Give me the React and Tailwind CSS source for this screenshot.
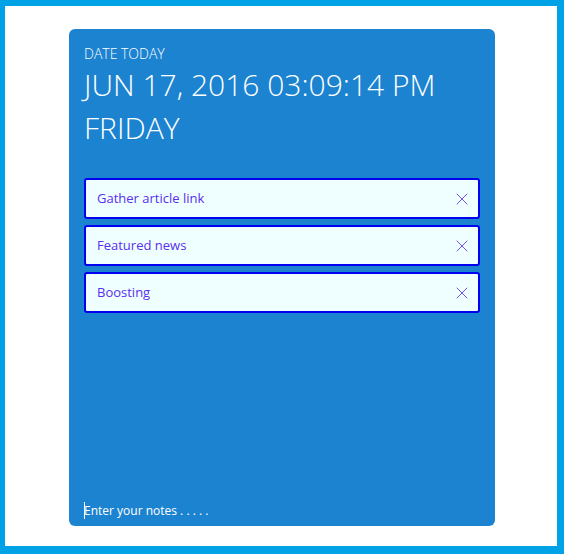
import React from "react";
import { X } from "lucide-react";

const todos = ["Gather article link", "Featured news", "Boosting"];

export default function App() {
    return (
        <div className="w-[564px] h-[554px] bg-white border-[#00a2e6] border-t-[6px] border-l-[5px] border-r-[7px] border-b-[8px] font-['Open_Sans',sans-serif]">
            <div className="ml-[64px] mt-[23px] w-[426px] h-[497px] bg-[#1c83d1] rounded-[6px] flex flex-col px-[15px] pt-[15px]">
                <div className="text-white text-[14px] leading-[20px] font-light">DATE TODAY</div>
                <div className="text-white text-[30px] leading-[43px] font-light -mt-[1px]">JUN 17, 2016 03:09:14 PM</div>
                <div className="text-white text-[30px] leading-[43px] font-light">FRIDAY</div>
                <div className="mt-[29px] flex flex-col gap-[6px]">
                    {todos.map(t => (
                        <div key={t} className="h-[41px] bg-[#efffff] border-2 border-[#0000f0] rounded-[3px] flex items-center justify-between pl-[11px] pr-[6px]">
                            <span className="text-[13px] text-[#5a2df0]">{t}</span>
                            <X size={20} strokeWidth={1} className="text-[#5a2df0]" />
                        </div>
                    ))}
                </div>
                <div className="mt-auto relative">
                    {/* focused caret */}
                    <span className="absolute left-0 top-[2px] w-px h-[17px] bg-white" />
                    <textarea
                        placeholder="Enter your notes . . . . ."
                        className="block w-full h-[26px] pt-[2px] bg-transparent text-[12px] text-white placeholder:text-white outline-none resize-none leading-[18px] font-['Open_Sans',sans-serif]"
                    />
                </div>
            </div>
        </div>
    );
}
